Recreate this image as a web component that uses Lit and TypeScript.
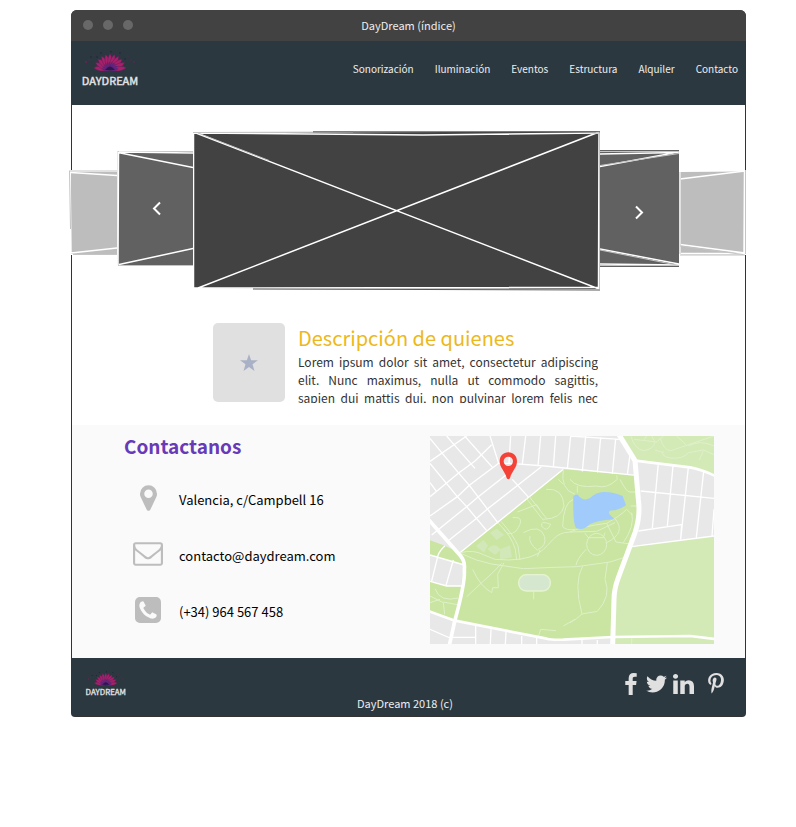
import { LitElement, html, css, svg } from "lit";
import { customElement, property } from "lit/decorators.js";

const ICONS: Record<string, { box: string; d: string }> = {
  marker: {
    box: "0 128 1024 1536",
    d: "M768 640q0-106-75-181t-181-75-181 75-75 181 75 181 181 75 181-75 75-181zm256 0q0 109-33 179l-364 774q-16 33-47.5 52t-67.5 19-67.5-19-46.5-52l-365-774q-33-70-33-179 0-212 150-362t362-150 362 150 150 362z",
  },
  envelope: {
    box: "0 256 1792 1408",
    d: "M1664 1504v-768q-32 36-69 66-268 206-426 338-51 43-83 67t-86.500 48.500-102.500 24.500h-2q-48 0-102.500-24.500t-86.500-48.500-83-67q-158-132-426-338-37-30-69-66v768q0 13 9.500 22.500t22.500 9.500h1472q13 0 22.500-9.500t9.500-22.500zm0-1051v-24.500l-.5-13-3-12.500-5.500-9-9-7.500-14-2.500h-1472q-13 0-22.500 9.500t-9.500 22.500q0 168 147 284 193 152 401 317 6 5 35 29.500t46 37.500 44.500 31.500 50.500 27.500 43 9h2q20 0 43-9t50.500-27.500 44.500-31.500 46-37.500 35-29.500q208-165 401-317 54-43 100.500-115.500t46.500-131.500zm128-37v1088q0 66-47 113t-113 47h-1472q-66 0-113-47t-47-113v-1088q0-66 47-113t113-47h1472q66 0 113 47t47 113z",
  },
  phone: {
    box: "128 128 1536 1536",
    d: "M1408 1193q0-11-2-16t-18-16.5-40.5-25-47.5-26.5-45.5-25-28.5-15q-5-3-19-13t-25-15-21-5q-15 0-36.5 20.5t-39.5 45-38.5 45-33.5 20.5q-7 0-16.5-3.5t-15.5-6.5-17-9.5-14-8.5q-99-55-170-126.5t-127-170.5q-2-3-8.5-14t-9.5-17-6.5-15.5-3.5-16.5q0-13 20.5-33.5t45-38.5 45-39.5 20.5-36.5q0-10-5-21t-15-25-13-19q-3-6-15-28.5t-25-45.5-26.5-47.5-25-40.5-16.5-18-16-2q-48 0-101 22-46 21-80 94.5t-34 130.5q0 16 2.5 34t5 30.5 9 33 10 29.5 12.5 33 11 30q60 164 216.5 320.5t320.5 216.5q6 2 30 11t33 12.5 29.5 10 33 9 30.5 5 34 2.5q57 0 130.5-34t94.5-80q22-53 22-101zm256-777v960q0 119-84.5 203.5t-203.5 84.5h-960q-119 0-203.5-84.5t-84.5-203.5v-960q0-119 84.5-203.5t203.5-84.5h960q119 0 203.5 84.5t84.5 203.5z",
  },
  facebook: {
    box: "479 0 864 1664",
    d: "M1343 12v264h-157q-86 0-116 36t-30 108v189h293l-39 296h-254v759h-306v-759h-255v-296h255v-218q0-186 104-288.5t277-102.5q147 0 228 12z",
  },
  twitter: {
    box: "108 256 1576 1280",
    d: "M1684 408q-67 98-162 167 1 14 1 42 0 130-38 259.5t-115.5 248.5-184.5 210.5-258 146-323 54.5q-271 0-496-145 35 4 78 4 225 0 401-138-105-2-188-64.5t-114-159.5q33 5 61 5 43 0 85-11-112-23-185.5-111.5t-73.5-205.5v-4q68 38 146 41-66-44-105-115t-39-154q0-88 44-163 121 149 294.5 238.5t371.5 99.5q-8-38-8-74 0-134 94.5-228.5t228.5-94.5q140 0 236 102 109-21 205-78-37 115-142 178 93-10 186-50z",
  },
  linkedin: {
    box: "128 148 1536 1468",
    d: "M477 625v991h-330v-991h330zm21-306q1 73-50.5 122t-135.5 49h-2q-82 0-132-49t-50-122q0-74 51.5-122.5t134.5-48.5 133 48.5 51 122.5zm1166 729v568h-329v-530q0-105-40.5-164.5t-126.5-59.5q-63 0-105.5 34.5t-63.5 85.5q-11 30-11 81v553h-329q2-399 2-647t-1-296l-1-48h329v144h-2q20-32 41-56t56.5-52 87-43.5 114.5-15.5q171 0 275 113.5t104 332.5z",
  },
  pinterest: {
    box: "256 0 1280 1792",
    d: "M256 597q0-108 37.5-203.5t103.5-166.5 152-123 185-78 202-26q158 0 294 66.5t221 193.5 85 287q0 96-19 188t-60 177-100 149.5-145 103-189 38.500q-68 0-135-32t-96-88q-10 39-28 112.5t-23.5 95-20.5 71-26 71-32 62.5-46 77.5-62 86.5l-14 5-9-10q-15-157-15-188 0-92 21.5-206.5t66.5-287.5 52-203q-32-65-32-169 0-83 52-156t132-73q61 0 95 40.5t34 102.5q0 66-44 191t-44 187q0 63 45 104.5t109 41.5q55 0 102-25t78.5-68 56-95 38-110.5 20-111 6.5-99.5q0-173-109.5-269.5t-285.5-96.5q-200 0-334 129.5t-134 328.5q0 44 12.5 85t27 65 27 45.5 12.5 30.5q0 28-15 73t-37 45q-2 0-17-3-51-15-90.5-56t-61-94.5-32.5-108-11-106.5z",
  },
};

const icon = (name: string, cls: string) => html`
  <svg class=${cls} viewBox=${ICONS[name].box} aria-hidden="true"><path d=${ICONS[name].d} /></svg>
`;

@customElement("day-logo")
export class DayLogo extends LitElement {
  @property({ type: Boolean, reflect: true }) small = false;

  static styles = css`
    :host { display: block; width: 60px; height: 36px; }
    :host([small]) { width: 43px; height: 26px; }
    .art { display: block; width: 100%; height: 100%; }
    .word { font: 400 11px "Noto Sans CJK SC", sans-serif; fill: #e6e6e6; stroke: #e6e6e6; stroke-width: 0.4; }
    .far { fill: #a8206a; stroke: #4a2358; stroke-width: 0.4; }
    .near { fill: #5b2580; }
    .core { fill: #2a1650; }
    .dust { fill: #6d2160; }
    .dim { fill: #1b2239; }
  `;

  render() {
    const angles = [-82, -64, -48, -32, -16, 0, 16, 32, 48, 64, 82];
    return html`
      <svg class="art" viewBox="0 0 60 36" role="img" aria-label="DayDream">
        ${angles.map(
          (a) => svg`<g transform="rotate(${a} 29 19)">
            <path class="far" d="M29 19Q24.500 9 29 2.500Q33.500 9 29 19z" />
            <path class="near" d="M29 19Q26 13 29 10.500Q32 13 29 19z" /></g>`
        )}
        <path class="core" d="M24 19Q29 12 34 19z" />
        <g class="dust"><circle cx="5" cy="11" r=".9" /><circle cx="8" cy="9" r=".6" /><circle cx="53" cy="11" r=".8" /><circle cx="50" cy="9" r=".6" /><circle cx="47" cy="5" r=".6" /><circle cx="13" cy="4" r=".5" /></g>
        <g class="dim"><circle cx="30" cy=".8" r=".7" /><circle cx="20" cy="2" r=".7" /><circle cx="39" cy="2" r=".7" /><circle cx="10" cy="6" r=".7" /><circle cx="16" cy="6" r=".7" /><circle cx="44" cy="8" r=".7" /></g>
        <text class="word" x="29" y="34" text-anchor="middle">DAYDREAM</text>
      </svg>
    `;
  }
}

@customElement("sketch-carousel")
export class SketchCarousel extends LitElement {
  static styles = css`
    :host { display: grid; grid-template-columns: 48fr 76fr 407fr 79fr 67fr; height: 160px; }
    .tile { display: grid; min-width: 0; margin: 0; padding: 0; border: 0; background: none; }
    .tile > * { grid-area: 1 / 1; }
    .sheet { display: block; width: 100%; height: 160px; }
    .arrow { place-self: center; width: 16px; height: 20px; fill: none; stroke: #fff; stroke-width: 2; }
    button { cursor: pointer; }
    .line { fill: none; stroke: #fff; stroke-width: 1.5; }
    .edge { fill: none; stroke: #c4c4c4; stroke-width: 1; }
    .shade { fill: none; stroke: #555; stroke-width: 1; }
    .cover { fill: #fff; }
    .light { fill: #bdbdbd; }
    .mid { fill: #616161; }
    .dark { fill: #424242; }
  `;

  render() {
    return html`
      <div class="tile">
        <svg class="sheet" viewBox="0 0 48 160" preserveAspectRatio="none">
          <path class="cover" d="M0 39H48V124H1z" />
          <path class="light" d="M2 41H48V123H2z" />
          <path class="line" d="M2 41.500L48 44.500M2 122L48 117M1 39L2 122" />
          <path class="edge" d="M.5 40L1.500 98M0 40H48M4 123.500H48" />
        </svg>
      </div>
      <button class="tile" type="button" aria-label="Anterior">
        <svg class="sheet" viewBox="0 0 76 160" preserveAspectRatio="none">
          <path class="mid" d="M1 21H76V134H1z" />
          <path class="edge" d="M1 20.500H76M0 20V134M1 134.500H76" />
          <path class="line" d="M2 21L76 22M1 21.500L76 36.500M2 133.500L76 117.500M1.500 21L1 134" />
        </svg>
        <svg class="arrow" viewBox="0 0 16 20"><path d="M13 1.500L7 7.500L13 13.500" /></svg>
      </button>
      <div class="tile">
        <svg class="sheet" viewBox="0 0 407 160" preserveAspectRatio="none">
          <path class="dark" d="M0 2L407 .5V158L0 157z" />
          <path class="line" d="M0 2L230 4L407 2M0 157L407 156.500M3 2L406 158M406 1L5 157M.5 2V157M406 1L405.500 158" />
          <path class="edge" d="M5 2L76 29.500M0 1.500L160 1M406.500 0V158" />
          <path class="shade" d="M120 .8L407 .8M60 158L407 159" />
        </svg>
      </div>
      <button class="tile" type="button" aria-label="Siguiente">
        <svg class="sheet" viewBox="0 0 79 160" preserveAspectRatio="none">
          <path class="mid" d="M0 19H79V136H0z" />
          <path class="line" d="M0 23L79 21.500M0 35.500L79 21M0 118L79 133M0 133L79 134" />
          <path class="edge" d="M0 20.500H79M0 34.500L79 22.500M0 119L79 134.500M0 134.500H79" />
        </svg>
        <svg class="arrow" viewBox="0 0 16 20"><path d="M4 5.500L10 11.500L4 17.500" /></svg>
      </button>
      <div class="tile">
        <svg class="sheet" viewBox="0 0 67 160" preserveAspectRatio="none">
          <path class="cover" d="M0 41L67 39V124H0z" />
          <path class="light" d="M2 41L65 40.500V123.500H2z" />
          <path class="line" d="M1 48L66 40M1 113.500L66 122M1 122.500H66M65.500 39L65 122" />
          <path class="edge" d="M1 115L64 123.500M1 41V123M66.500 39V123M1 124H66" />
        </svg>
      </div>
    `;
  }
}

@customElement("park-map")
export class ParkMap extends LitElement {
  static styles = css`
    :host { display: block; }
    .map { display: block; width: 100%; height: 208px; }
    .block { fill: #e8e8e8; }
    .park { fill: #c9e5a1; }
    .field { fill: #d3eab7; }
    .pond { fill: #a1cbfb; }
    .pitch { fill: #d5e8cf; stroke: #e6f3d2; stroke-width: 4; }
    .lawn { fill: #d3e8b8; }
    .road { fill: none; stroke: #fff; stroke-linejoin: round; }
    .wide { stroke-width: 15; }
    .narrow { stroke-width: 11; }
    .medium { stroke-width: 8; }
    .street { stroke-width: 4; }
    .trail { fill: none; stroke: #dff0c8; stroke-width: 3; }
    .pin { fill: #f44336; fill-rule: evenodd; }
  `;

  render() {
    return html`
      <svg class="map" viewBox="0 0 852 624" preserveAspectRatio="xMidYMid slice" role="img" aria-label="Mapa: Valencia, c/Campbell 16">
        <path class="block" d="M0 0H852V624H0z" />
        <path class="field" d="M570 0H852V118Q815 100 780 94L615 75zM605 332L852 300V624H548V480z" />
        <path class="park" d="M400 100L618 118L627 240L555 470L548 606L365 612L75 555L103 385L88 352zM0 313L45 329L88 350L103 387L0 357zM0 436L50 450H96L75 553L0 527z" />

        <g class="road street">
          <path d="M0 7L37 52L85 110L118 148L205 262M0 82L82 182L110 212L170 284M0 140L20 167M50 0L72 26L135 97M104 0L188 95" />
          <path d="M0 76L110 0M0 182L20 166L85 112L135 75L185 26M0 240L82 182L118 148L206 82M5 297L110 212L145 182L242 106M50 318L140 247L175 217L334 92M88 352L400 100" />
          <path d="M180 0L206 82H240L345 90L618 118M242 0L237 80M287 0L277 84M332 0L324 90M377 0L370 94M422 0L412 98M467 0L457 106M512 4L502 110M557 8L547 114M600 55L592 117M420 0L570 10" />
          <path d="M247 130L296 184" />
          <path d="M685 82L667 276M729 90L712 270M775 94L752 310M821 106L799 304M852 220L846 300M632 165L852 187M625 285L755 266L752 310M605 332L852 300" />
          <path d="M45 329Q28 345 24 358L5 435M70 372L48 448M0 357L103 387M0 436L50 450H96" />
          <path d="M0 580L60 606M70 560L66 604H137M137 570V624M183 580L181 624M228 588L226 624M275 600V624M320 606V624M456 612V624M502 612V624" />
        </g>
        <g class="trail">
          <path d="M290 188L340 253M298 182L350 248M205 262Q245 300 256 340L260 372M213 256Q252 300 264 330L270 372" />
          <path d="M92 350Q130 340 160 356L195 370Q280 378 325 352C370 320 370 290 420 288L500 286L555 260" />
          <path d="M92 352Q140 376 185 384L280 398Q360 394 440 392L540 378L590 362" />
          <path d="M348 160Q400 155 402 210Q395 248 340 250M248 245Q290 240 258 285Q235 305 220 278M262 228L320 206L330 222M280 290Q330 262 344 302Q350 330 322 342Q294 320 300 300M330 342L322 362M362 265Q350 292 335 270Q330 252 362 265M385 130L400 145M400 100Q390 160 435 175M430 190Q400 200 398 272Q410 285 435 280" />
          <path d="M420 130Q440 158 500 150Q530 160 562 130L560 118M570 130Q590 170 600 168H618M442 150V170M420 288Q460 270 530 262Q570 240 590 220L608 238M530 262L558 318L600 324M555 248Q590 290 530 320M605 230Q615 270 580 320M602 210H622" />
          <path d="M470 325A30 33 0 1 0 530 325A30 33 0 1 0 470 325M465 292L475 305H520L525 290M468 340Q440 370 438 388M458 390Q430 440 456 534L502 526Q545 480 525 430L532 380M456 534Q440 550 420 560" />
          <path d="M128 400Q150 450 185 470L188 455H205L203 415L222 380M110 482L190 408L215 382M311 466V490M325 602L332 580L378 584M400 570L435 550" />
          <path d="M15 458Q30 500 85 486M0 480L40 500L44 535M0 500L30 490M40 498L82 506" />
          <path d="M602 0Q615 40 640 44Q672 40 675 18L665 0M612 10L680 18L700 0M650 0L640 14M690 5Q700 40 720 45L770 28L852 0M700 45Q690 60 720 66Q760 70 775 50L820 42L852 56M775 30Q810 10 852 30M820 44L808 72M700 50L675 42M740 0L770 28" />
          <path d="M605 600V624" />
        </g>
        <path class="lawn" d="M180 290L200 278L222 296L200 312zM138 330L160 312L174 328L162 350zM172 340Q195 315 212 342L195 356zM210 340L240 328L246 364L210 370z" />
        <rect class="pitch" x="266" y="416" width="95" height="49" rx="23" />
        <path class="pond" d="M430 180Q442 170 448 182Q462 196 480 186Q500 166 525 168Q550 168 578 180L588 208Q565 224 540 224Q530 230 550 246L552 250Q500 254 480 264Q460 286 438 276Q428 262 430 180z" />
        <path class="road wide" d="M567 -4L615 74L625 190Q632 240 615 290L565 425Q552 460 552 490L548 628" />
        <path class="road medium" d="M615 74L780 94Q815 100 856 120" />
        <path class="road narrow" d="M-5 250L92 360Q106 378 103 400Q106 440 75 552L58 628" />
        <path class="road medium" d="M-5 525L75 554L350 608Q365 612 400 611L548 603L780 600L856 609" />
        <path class="pin" d="M235 49C250 49 261 60 261 76C261 96 246 104 240 126Q235 134 230 126C224 104 209 96 209 76C209 60 220 49 235 49zM235 62A14 14 0 1 0 235 90A14 14 0 1 0 235 62z" />
      </svg>
    `;
  }
}

@customElement("app-root")
export class AppRoot extends LitElement {
  static styles = css`
    :host {
      display: block;
      padding: 10px 50px 0 71px;
      font-family: "Noto Sans CJK SC", sans-serif;
      color: #000;
    }
    h1, h2, p, ul { margin: 0; padding: 0; font-weight: 400; }
    ul { list-style: none; }
    a { color: inherit; text-decoration: none; }
    .window { border-radius: 6px 6px 4px 4px; background: #333; }
    .titlebar {
      display: grid;
      grid-template-columns: 1fr auto 1fr;
      align-items: center;
      height: 29px;
      padding: 0 12px 2px 12px;
      border-radius: 6px 6px 0 0;
      background: #424242;
      color: #eee;
    }
    .dots { display: flex; gap: 10px; }
    .dot { width: 10px; height: 10px; border-radius: 50%; background: #686868; }
    .title { font-size: 11px; line-height: 16px; }
    .page { padding: 0 1px 1px; }
    .header {
      display: flex;
      align-items: center;
      justify-content: space-between;
      height: 56px;
      padding: 0 7px 8px 9px;
      background: #2c3840;
    }
    .nav { display: flex; gap: 21px; font-size: 10px; line-height: 16px; color: #eee; }
    .main { display: block; background: #fff; }
    .intro { padding: 26px 0 22px; }
    .carousel { margin: 0 -1px 32px -3px; }
    .about { display: flex; justify-content: center; gap: 13px; padding-right: 6px; }
    .picture {
      display: grid;
      place-items: center;
      width: 72px;
      height: 79px;
      border-radius: 5px;
      background: #e0e0e0;
    }
    .star { width: 18px; height: 17px; fill: #a9b1c6; }
    .words { width: 300px; height: 80px; overflow: hidden; }
    .heading { font-size: 20px; line-height: 30px; color: #edb81c; }
    .lorem { font-size: 12px; line-height: 18px; color: #333; }
    .line { display: block; text-align: justify; text-align-last: justify; }
    .contact {
      display: grid;
      grid-template-columns: 306fr 284fr;
      padding: 11px 31px 14px 52px;
      background: #fafafa;
    }
    .subtitle { font-size: 19px; font-weight: 700; line-height: 20px; color: #673ab7; }
    .ways { display: grid; gap: 20px; padding-top: 24px; font-size: 13px; line-height: 32px; }
    .way { display: grid; grid-template-columns: 48px 1fr; align-items: center; column-gap: 7px; }
    .way svg { justify-self: center; fill: #bdbdbd; }
    .way a { padding-top: 4px; }
    .marker { width: 17px; height: 26px; }
    .envelope { width: 30px; height: 24px; }
    .phone { width: 26px; height: 26px; }
    .footer {
      display: grid;
      grid-template-columns: 1fr auto 1fr;
      height: 58px;
      padding: 0 20px 0 13px;
      background: #2c3840;
      color: #eee;
    }
    .foot-logo { padding-top: 13px; }
    .legal { align-self: end; padding-bottom: 5px; font-size: 11px; line-height: 16px; }
    .social { display: flex; justify-content: flex-end; align-items: center; height: 52px; gap: 6px; }
    .social a { display: grid; }
    .social svg { height: 22px; fill: #e0e0e0; }
    .social .facebook { width: 12px; margin-right: 3px; }
    .social .twitter { width: 21px; }
    .social .linkedin { width: 21px; }
    .social .pinterest { width: 18px; margin-left: 7px; }
  `;

  render() {
    const nav = ["Sonorización", "Iluminación", "Eventos", "Estructura", "Alquiler", "Contacto"];
    const lorem = [
      "Lorem ipsum dolor sit amet, consectetur adipiscing",
      "elit. Nunc maximus, nulla ut commodo sagittis,",
      "sapien dui mattis dui, non pulvinar lorem felis nec",
    ];
    const ways = [
      { icon: "marker", text: "Valencia, c/Campbell 16", href: "#mapa" },
      { icon: "envelope", text: "contacto@daydream.com", href: "mailto:contacto@daydream.com" },
      { icon: "phone", text: "(+34) 964 567 458", href: "tel:+34964567458" },
    ];
    const social = ["facebook", "twitter", "linkedin", "pinterest"];
    return html`
      <div class="window">
        <div class="titlebar">
          <div class="dots"><span class="dot"></span><span class="dot"></span><span class="dot"></span></div>
          <p class="title">DayDream (índice)</p>
        </div>
        <div class="page">
          <header class="header">
            <day-logo></day-logo>
            <nav class="nav">${nav.map((n) => html`<a href="#">${n}</a>`)}</nav>
          </header>
          <main class="main">
            <section class="intro">
              <sketch-carousel class="carousel"></sketch-carousel>
              <div class="about">
                <div class="picture">
                  <svg class="star" viewBox="0 0 18 17"><path d="M9 0L11.100 6.200H18L12.500 10.200L14.500 17L9 12.900L3.500 17L5.500 10.200L0 6.200H6.900z" /></svg>
                </div>
                <div class="words">
                  <h1 class="heading">Descripción de quienes</h1>
                  <p class="lorem">${lorem.map((l) => html`<span class="line">${l}</span>`)}</p>
                </div>
              </div>
            </section>
            <section class="contact">
              <div>
                <h2 class="subtitle">Contactanos</h2>
                <ul class="ways">
                  ${ways.map((w) => html`<li class="way">${icon(w.icon, w.icon)}<a href=${w.href}>${w.text}</a></li>`)}
                </ul>
              </div>
              <park-map id="mapa"></park-map>
            </section>
          </main>
          <footer class="footer">
            <div class="foot-logo"><day-logo small></day-logo></div>
            <p class="legal">DayDream 2018 (c)</p>
            <nav class="social">${social.map((s) => html`<a href="#" aria-label=${s}>${icon(s, s)}</a>`)}</nav>
          </footer>
        </div>
      </div>
    `;
  }
}
